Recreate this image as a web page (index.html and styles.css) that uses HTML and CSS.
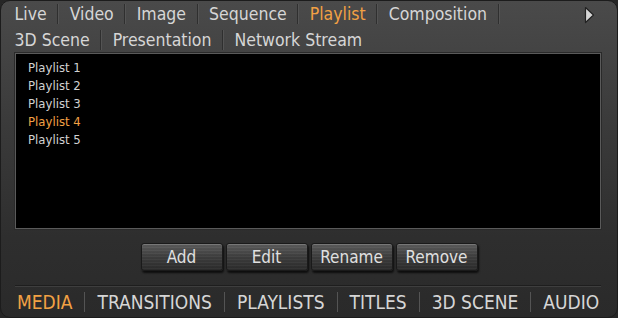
FILE: index.html
```html
<!DOCTYPE html>
<html lang="en">
<head>
    <meta charset="UTF-8">
    <meta name="viewport" content="width=device-width, initial-scale=1.0">
    <title>Media Panel</title>
    <link rel="stylesheet" href="styles.css">
</head>
<body>
    <div class="panel">
        <div class="tabs-top">
            <div class="tab-row">
                <span class="tab">Live</span><span class="sep"></span>
                <span class="tab">Video</span><span class="sep"></span>
                <span class="tab">Image</span><span class="sep"></span>
                <span class="tab">Sequence</span><span class="sep"></span>
                <span class="tab active">Playlist</span><span class="sep"></span>
                <span class="tab">Composition</span><span class="sep"></span>
            </div>
            <div class="tab-row">
                <span class="tab">3D Scene</span><span class="sep"></span>
                <span class="tab">Presentation</span><span class="sep"></span>
                <span class="tab">Network Stream</span>
            </div>
            <svg class="more" width="11" height="18" viewBox="0 0 11 18">
                <path d="M1.5 1.5 L9.5 9 L1.5 16.5 Z" fill="#d6d6d6" stroke="#222" stroke-width="1.2" stroke-linejoin="round"/>
            </svg>
        </div>

        <ul class="playlist">
            <li>Playlist 1</li>
            <li>Playlist 2</li>
            <li>Playlist 3</li>
            <li class="active">Playlist 4</li>
            <li>Playlist 5</li>
        </ul>

        <div class="buttons">
            <button>Add</button>
            <button>Edit</button>
            <button>Rename</button>
            <button>Remove</button>
        </div>

        <div class="bottom-tabs">
            <span class="tab active">MEDIA</span><span class="sep"></span>
            <span class="tab">TRANSITIONS</span><span class="sep"></span>
            <span class="tab">PLAYLISTS</span><span class="sep"></span>
            <span class="tab">TITLES</span><span class="sep"></span>
            <span class="tab">3D SCENE</span><span class="sep"></span>
            <span class="tab">AUDIO</span>
        </div>
    </div>
</body>
</html>
```

FILE: styles.css
```css
body {
  margin: 0;
  background: #262626;
  font-family: "DejaVu Sans Condensed", "DejaVu Sans", sans-serif;
  font-stretch: condensed;
  color: #d6d6d6;
}
.panel {
  width: 616px;
  height: 316px;
  border: 1px solid #1c1c1c;
  border-radius: 10px;
  background: linear-gradient(#4a4a4a, #3a3a3a 40%, #2e2e2e 75%, #2a2a2a);
  position: relative;
  overflow: hidden;
}
.tabs-top {
  padding: 0 0 0 3px;
}
.tab-row {
  display: flex;
  align-items: center;
  height: 26px;
}
.tab {
  font-size: 17.5px;
  padding: 0 10.5px;
  white-space: nowrap;
}
.tab.active {
  color: #f2a144;
}
.sep {
  width: 1px;
  height: 20px;
  background: #2f2f2f;
  border-right: 1px solid #545454;
}
.more {
  position: absolute;
  top: 5px;
  right: 22px;
}
.playlist {
  list-style: none;
  margin: 0 16px 0 14px;
  padding: 5px 0 0 12px;
  height: 169px;
  background: #000;
  border: 1px solid #5a5a5a;
  box-shadow: 0 0 0 1px #2a2a2a;
}
.playlist li {
  font-size: 13px;
  line-height: 18px;
  color: #d2d2d2;
}
.playlist li.active {
  color: #f2a144;
}
.buttons {
  display: flex;
  justify-content: center;
  gap: 3px;
  margin-top: 14px;
}
.buttons button {
  width: 82px;
  height: 28px;
  font-family: inherit;
  font-stretch: condensed;
  font-size: 17px;
  color: #e0e0e0;
  border: 1px solid #1a1a1a;
  border-radius: 3px;
  background:
    repeating-linear-gradient(rgba(255,255,255,0.03) 0 1px, rgba(0,0,0,0.04) 1px 3px),
    linear-gradient(#5e5e5e, #3e3e3e 50%, #2c2c2c);
  box-shadow: inset 0 1px 0 #777, 1px 2px 2px rgba(0,0,0,0.7);
}
.bottom-tabs {
  display: flex;
  align-items: center;
  margin: 14px 16px 0 14px;
  padding-top: 3px;
  height: 26px;
  border-top: 1px solid #1e1e1e;
  box-shadow: inset 0 1px 0 #3e3e3e;
}
.bottom-tabs .tab {
  font-size: 19px;
  padding: 0 12px 0 2px;
}
.bottom-tabs .sep + .tab {
  padding-left: 12px;
}
```
